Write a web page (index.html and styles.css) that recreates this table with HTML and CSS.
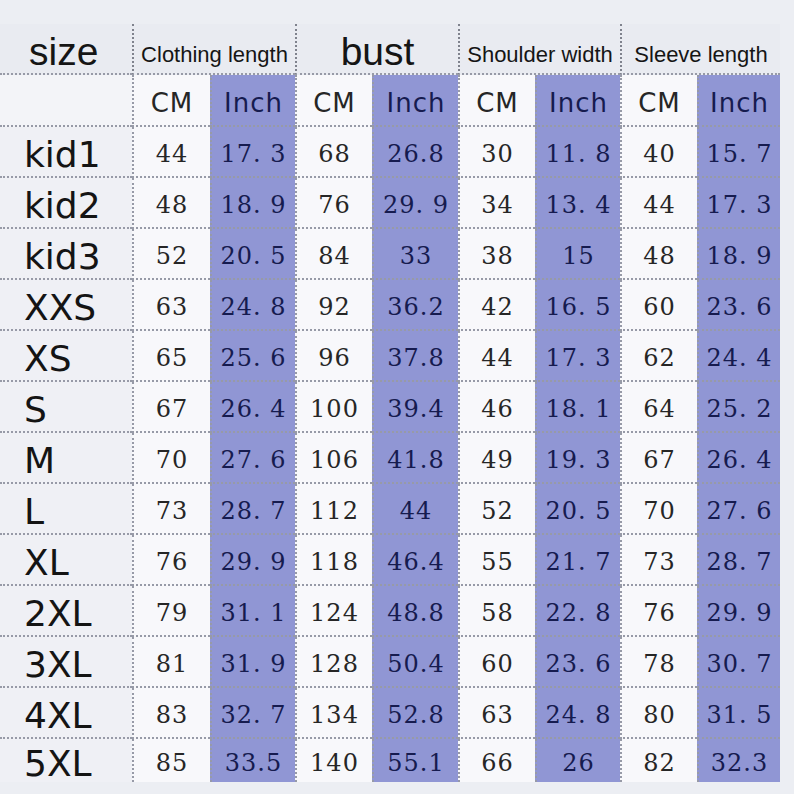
FILE: index.html
```html
<!DOCTYPE html>
<html>
<head>
<meta charset="utf-8">
<link rel="stylesheet" href="styles.css">
</head>
<body>
<div class="chart">
  <div class="h size-h">size</div>
  <div class="h grp small">Clothing length</div>
  <div class="h grp big">bust</div>
  <div class="h grp small">Shoulder width</div>
  <div class="h grp small">Sleeve length</div>

  <div class="sub blank"></div>
  <div class="sub cm">CM</div><div class="sub in">Inch</div>
  <div class="sub cm">CM</div><div class="sub in">Inch</div>
  <div class="sub cm">CM</div><div class="sub in">Inch</div>
  <div class="sub cm">CM</div><div class="sub in">Inch</div>

  <div class="sz">kid1</div><div class="c">44</div><div class="i">17. 3</div><div class="c">68</div><div class="i">26.8</div><div class="c">30</div><div class="i">11. 8</div><div class="c">40</div><div class="i">15. 7</div>
  <div class="sz">kid2</div><div class="c">48</div><div class="i">18. 9</div><div class="c">76</div><div class="i">29. 9</div><div class="c">34</div><div class="i">13. 4</div><div class="c">44</div><div class="i">17. 3</div>
  <div class="sz">kid3</div><div class="c">52</div><div class="i">20. 5</div><div class="c">84</div><div class="i">33</div><div class="c">38</div><div class="i">15</div><div class="c">48</div><div class="i">18. 9</div>
  <div class="sz">XXS</div><div class="c">63</div><div class="i">24. 8</div><div class="c">92</div><div class="i">36.2</div><div class="c">42</div><div class="i">16. 5</div><div class="c">60</div><div class="i">23. 6</div>
  <div class="sz">XS</div><div class="c">65</div><div class="i">25. 6</div><div class="c">96</div><div class="i">37.8</div><div class="c">44</div><div class="i">17. 3</div><div class="c">62</div><div class="i">24. 4</div>
  <div class="sz">S</div><div class="c">67</div><div class="i">26. 4</div><div class="c">100</div><div class="i">39.4</div><div class="c">46</div><div class="i">18. 1</div><div class="c">64</div><div class="i">25. 2</div>
  <div class="sz">M</div><div class="c">70</div><div class="i">27. 6</div><div class="c">106</div><div class="i">41.8</div><div class="c">49</div><div class="i">19. 3</div><div class="c">67</div><div class="i">26. 4</div>
  <div class="sz">L</div><div class="c">73</div><div class="i">28. 7</div><div class="c">112</div><div class="i">44</div><div class="c">52</div><div class="i">20. 5</div><div class="c">70</div><div class="i">27. 6</div>
  <div class="sz">XL</div><div class="c">76</div><div class="i">29. 9</div><div class="c">118</div><div class="i">46.4</div><div class="c">55</div><div class="i">21. 7</div><div class="c">73</div><div class="i">28. 7</div>
  <div class="sz">2XL</div><div class="c">79</div><div class="i">31. 1</div><div class="c">124</div><div class="i">48.8</div><div class="c">58</div><div class="i">22. 8</div><div class="c">76</div><div class="i">29. 9</div>
  <div class="sz">3XL</div><div class="c">81</div><div class="i">31. 9</div><div class="c">128</div><div class="i">50.4</div><div class="c">60</div><div class="i">23. 6</div><div class="c">78</div><div class="i">30. 7</div>
  <div class="sz">4XL</div><div class="c">83</div><div class="i">32. 7</div><div class="c">134</div><div class="i">52.8</div><div class="c">63</div><div class="i">24. 8</div><div class="c">80</div><div class="i">31. 5</div>
  <div class="sz last">5XL</div><div class="c last">85</div><div class="i last">33.5</div><div class="c last">140</div><div class="i last">55.1</div><div class="c last">66</div><div class="i last">26</div><div class="c last">82</div><div class="i last">32.3</div>
</div>
</body>
</html>
```

FILE: styles.css
```css
html, body {
  margin: 0;
  padding: 0;
}
body {
  width: 794px;
  height: 794px;
  overflow: hidden;
  background: #eceef3;
}
.chart {
  margin-top: 24px;
  display: grid;
  grid-template-columns: 132px 78px 85px 77px 86px 77px 85px 77px 83px;
  grid-template-rows: 51px 52px repeat(12, 51px) 43px;
  width: 780px;
}
.chart > div {
  display: flex;
  align-items: center;
  justify-content: center;
  box-sizing: border-box;
  border-bottom: 2px dotted #979aa7;
  white-space: pre;
}
.h {
  background: #e9ebf1;
  color: #151515;
  font-family: "Liberation Sans", Arial, sans-serif;
  padding-top: 12px;
}
.size-h {
  font-size: 39px;
  justify-content: flex-start !important;
  padding-left: 29px;
  padding-top: 6px;
}
.grp {
  grid-column: span 2;
  border-left: 2px dotted #7f828d;
}
.small {
  font-size: 22px;
}
.big {
  font-size: 39px;
  padding-top: 6px;
}
.sub {
  font-family: "DejaVu Sans", Verdana, sans-serif;
  font-size: 26px;
  letter-spacing: 1px;
  border-left: 2px dotted #979aa7;
  padding-top: 5px;
}
.blank {
  background: #f3f4f8;
  border-left: none !important;
}
.cm, .c {
  background: #f8f8fb;
  color: #262626;
}
.in, .i {
  background: #9096d4;
  color: #161b4f;
}
.c, .i {
  font-family: "DejaVu Serif", "Liberation Serif", serif;
  font-size: 24px;
  letter-spacing: 1px;
  border-left: 2px dotted #979aa7;
  padding-top: 4px;
}
.i {
  letter-spacing: 1px;
}
.sz {
  background: #eff0f5;
  color: #141414;
  font-family: "DejaVu Sans", Verdana, sans-serif;
  font-size: 36px;
  justify-content: flex-start !important;
  padding-left: 24px;
  padding-top: 5px;
}
.last {
  border-bottom: none !important;
}
```
